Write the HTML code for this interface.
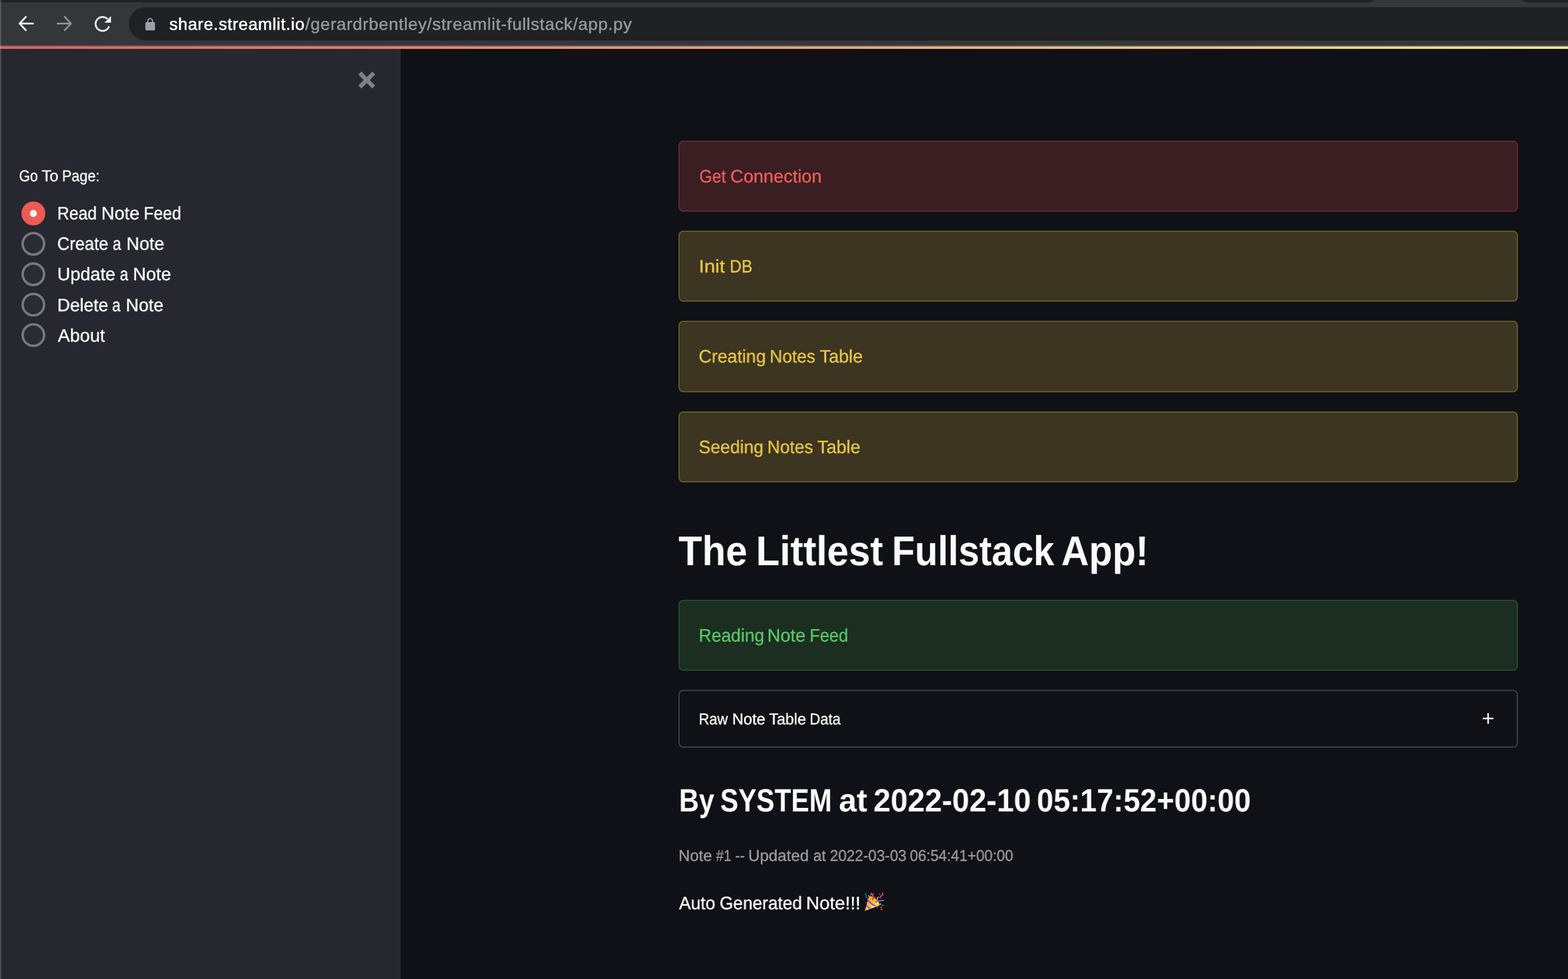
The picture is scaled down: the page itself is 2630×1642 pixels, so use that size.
<!DOCTYPE html>
<html lang="en">
<head>
<meta charset="utf-8">
<title>app · Streamlit</title>
<style>
*{box-sizing:border-box;margin:0;padding:0}
html,body{width:2630px;height:1642px;overflow:hidden;background:#0f1116}
body{position:relative;font-family:'Liberation Sans', sans-serif;-webkit-font-smoothing:antialiased}
.abs,.t,svg{position:absolute}
.t,.w{display:block;white-space:pre;line-height:1;transform-origin:0 0;font-style:normal;text-rendering:geometricPrecision;will-change:transform}
.w{position:absolute;top:0}
/* browser chrome */
#tabstrip{left:0;top:0;width:2630px;height:4px;background:#35363a}
#tabstrip i{position:absolute;top:0;height:4px;background:#202124}
#tabstrip i.l{left:0;width:2304px;border-bottom-right-radius:12px 4px}
#tabstrip i.r{left:2552px;width:78px;border-bottom-left-radius:12px 4px}
#toolbar{left:0;top:4px;width:2630px;height:72px;background:#35363a}
#tbline{left:0;top:76px;width:2630px;height:2px;background:#5d5f63}
#omni{left:216px;top:12px;width:2414px;height:56px;border-radius:28px 0 0 28px;background:#202124}
#url{letter-spacing:.7px}
#url .dom{color:#fff}
/* streamlit */
#deco{left:0;top:78px;width:2630px;height:4px;background:linear-gradient(90deg,#ee5c53,#fefc8e) 0 0/3012px 4px no-repeat}
#sidebar{left:0;top:82px;width:672px;height:1560px;background:#26272f}
#main{left:672px;top:82px;width:1958px;height:1560px;background:#0f1116}
#edge{left:0;top:0;width:2px;height:1642px;background:rgba(255,255,255,.18)}
.alert{left:1138px;width:1408px;height:119px;border:2px solid;border-radius:8px}
.err{background:#3a1e22;border-color:#622c2e}
.warn{background:#3c3521;border-color:#685a2c}
.ok{background:#1b2e21;border-color:#264c2a}
#exp{left:1138px;top:1157px;width:1408px;height:97px;border:2px solid #404145;border-radius:8px}
.radio{left:36px;width:40px;height:40px;border-radius:50%;border:4px solid #78787e;background:#2a2b35}
.radio.on{border:14px solid #ed5b52;background:#eff1f5}
#url{left:0;top:27px;font-size:28.0px;font-weight:400;color:#96979a;-webkit-text-stroke:0.55px}
#url .w0{left:284.39px;transform:scaleX(1.0074)}
#url .w1{left:511.77px;transform:scaleX(1.0277)}
#lbl{left:0;top:282px;font-size:26.4px;font-weight:400;color:#fafafa;-webkit-text-stroke:0.4px}
#lbl .w0{left:32.46px;transform:scaleX(0.8947)}
#lbl .w1{left:70.1px;transform:scaleX(1.0075)}
#lbl .w2{left:104.47px;transform:scaleX(0.9143)}
#r1{left:0;top:344px;font-size:30.3px;font-weight:400;color:#fafafa;-webkit-text-stroke:0.4px}
#r1 .w0{left:96.04px;transform:scaleX(0.9168)}
#r1 .w1{left:169.96px;transform:scaleX(0.995)}
#r1 .w2{left:240.55px;transform:scaleX(0.9108)}
#r2{left:0;top:395px;font-size:30.3px;font-weight:400;color:#fafafa;-webkit-text-stroke:0.4px}
#r2 .w0{left:96.32px;transform:scaleX(0.9435)}
#r2 .w1{left:188.89px;transform:scaleX(0.84)}
#r2 .w2{left:211.57px;transform:scaleX(0.9917)}
#r3{left:0;top:446px;font-size:30.3px;font-weight:400;color:#fafafa;-webkit-text-stroke:0.4px}
#r3 .w0{left:96.3px;transform:scaleX(0.9989)}
#r3 .w1{left:200.79px;transform:scaleX(0.84)}
#r3 .w2{left:223.16px;transform:scaleX(0.9983)}
#r4{left:0;top:498px;font-size:30.3px;font-weight:400;color:#fafafa;-webkit-text-stroke:0.4px}
#r4 .w0{left:96.0px;transform:scaleX(0.9769)}
#r4 .w1{left:187.99px;transform:scaleX(0.84)}
#r4 .w2{left:210.98px;transform:scaleX(0.9868)}
#r5{left:0;top:549px;font-size:30.3px;font-weight:400;color:#fafafa;-webkit-text-stroke:0.4px}
#r5 .w0{left:96.55px;transform:scaleX(0.9987)}
#a1{left:0;top:282px;font-size:30.3px;font-weight:400;color:#ee5f55;-webkit-text-stroke:0.4px}
#a1 .w0{left:1172.66px;transform:scaleX(0.9116)}
#a1 .w1{left:1225.05px;transform:scaleX(1.0003)}
#a2{left:0;top:433px;font-size:30.3px;font-weight:400;color:#e8c547;-webkit-text-stroke:0.4px}
#a2 .w0{left:1171.78px;transform:scaleX(1.0895)}
#a2 .w1{left:1223.78px;transform:scaleX(0.8987)}
#a3{left:0;top:584px;font-size:30.3px;font-weight:400;color:#e8c547;-webkit-text-stroke:0.4px}
#a3 .w0{left:1172.37px;transform:scaleX(0.983)}
#a3 .w1{left:1290.82px;transform:scaleX(0.9671)}
#a3 .w2{left:1374.9px;transform:scaleX(0.9979)}
#a4{left:0;top:736px;font-size:30.3px;font-weight:400;color:#e8c547;-webkit-text-stroke:0.4px}
#a4 .w0{left:1172.38px;transform:scaleX(0.9764)}
#a4 .w1{left:1286.71px;transform:scaleX(0.9711)}
#a4 .w2{left:1370.7px;transform:scaleX(0.9979)}
#h1{left:0;top:890px;font-size:69.9px;font-weight:700;color:#fafafa}
#h1 .w0{left:1138.4px;transform:scaleX(0.9281)}
#h1 .w1{left:1267.58px;transform:scaleX(0.9311)}
#h1 .w2{left:1496.24px;transform:scaleX(0.8992)}
#h1 .w3{left:1780.39px;transform:scaleX(0.9194)}
#a5{left:0;top:1052px;font-size:30.3px;font-weight:400;color:#5bc767;-webkit-text-stroke:0.4px}
#a5 .w0{left:1171.51px;transform:scaleX(0.9738)}
#a5 .w1{left:1286.64px;transform:scaleX(1.0033)}
#a5 .w2{left:1357.5px;transform:scaleX(0.9338)}
#exl{left:0;top:1193px;font-size:26.4px;font-weight:400;color:#fafafa;-webkit-text-stroke:0.4px}
#exl .w0{left:1171.85px;transform:scaleX(0.9235)}
#exl .w1{left:1227.51px;transform:scaleX(0.9934)}
#exl .w2{left:1289.81px;transform:scaleX(0.9814)}
#exl .w3{left:1358.43px;transform:scaleX(0.9333)}
#h2{left:0;top:1316px;font-size:54.2px;font-weight:700;color:#fafafa}
#h2 .w0{left:1138.72px;transform:scaleX(0.8504)}
#h2 .w1{left:1208.44px;transform:scaleX(0.84)}
#h2 .w2{left:1406.92px;transform:scaleX(0.987)}
#h2 .w3{left:1465.14px;transform:scaleX(0.9533)}
#h2 .w4{left:1738.71px;transform:scaleX(0.9275)}
#cap{left:0;top:1422px;font-size:26.4px;font-weight:400;color:#9a9b9e;-webkit-text-stroke:0.4px}
#cap .w0{left:1137.58px;transform:scaleX(1.0085)}
#cap .w1{left:1200.5px;transform:scaleX(0.8673)}
#cap .w2{left:1233.47px;transform:scaleX(0.927)}
#cap .w3{left:1255.42px;transform:scaleX(1.0187)}
#cap .w4{left:1363.54px;transform:scaleX(0.9619)}
#cap .w5{left:1391.55px;transform:scaleX(0.9511)}
#cap .w6{left:1526.0px;transform:scaleX(0.9419)}
#bod{left:0;top:1501px;font-size:30.3px;font-weight:400;color:#fafafa;-webkit-text-stroke:0.4px}
#bod .w0{left:1139.34px;transform:scaleX(0.974)}
#bod .w1{left:1207.19px;transform:scaleX(0.9661)}
#bod .w2{left:1352.29px;transform:scaleX(1.0249)}
</style>
</head>
<body>
<div class="abs" id="main"></div>
<div class="abs" id="sidebar"></div>
<div class="abs" id="deco"></div>
<header>
<div class="abs" id="toolbar"></div>
<div class="abs" id="tabstrip"><i class="l"></i><i class="r"></i></div>
<div class="abs" id="tbline"></div>
<div class="abs" id="omni"></div>
<svg id="nav" style="left:0;top:0" width="300" height="78" viewBox="0 0 300 78" fill="none">
<g stroke="#f1f2f3" stroke-width="3" stroke-linecap="round" stroke-linejoin="miter">
<path d="M55.4 39.5H34M43.4 28.3 32.9 39.5 43.4 50.7"/>
</g>
<g stroke="#8e8f92" stroke-width="3" stroke-linecap="round" stroke-linejoin="miter">
<path d="M96.5 39.5H118M108.5 28.3 119 39.5 108.5 50.7"/>
</g>
<path d="M183 44.3A11.7 11.7 0 1 1 180.3 31.8" stroke="#f1f2f3" stroke-width="3"/>
<path d="M186.1 27V38H175.2Z" fill="#f1f2f3"/>
<rect x="243.8" y="37" width="16.2" height="14" rx="2" fill="#9aa0a6"/>
<path d="M248 38V35.2a3.9 3.9 0 0 1 7.8 0V38" stroke="#9aa0a6" stroke-width="2"/>
</svg>
<div class="t" id="url"><span class="w w0 dom">share.streamlit.io</span><span class="w w1 pth">/gerardrbentley/streamlit-fullstack/app.py</span></div>
</header>
<aside>
<svg id="close" style="left:596px;top:114px" width="40" height="40" viewBox="596 114 40 40"><path fill="#7f8086" d="M601.05 125.03 606.2 119.87 615.24 129.33 624.26 120.13 629.42 125.03 620.4 134.32 629.17 143.52 624.26 148.5 615.24 139.22 606.2 148.5 601.05 143.52 610.08 134.32Z"/></svg>
<label class="t" id="lbl"><span class="w w0">Go</span> <span class="w w1">To</span> <span class="w w2">Page:</span></label>
<div role="radiogroup">
<div class="abs radio on" style="top:338px"></div><span class="t" id="r1"><span class="w w0">Read</span> <span class="w w1">Note</span> <span class="w w2">Feed</span></span>
<div class="abs radio" style="top:389px"></div><span class="t" id="r2"><span class="w w0">Create</span> <span class="w w1">a</span> <span class="w w2">Note</span></span>
<div class="abs radio" style="top:440px"></div><span class="t" id="r3"><span class="w w0">Update</span> <span class="w w1">a</span> <span class="w w2">Note</span></span>
<div class="abs radio" style="top:491px"></div><span class="t" id="r4"><span class="w w0">Delete</span> <span class="w w1">a</span> <span class="w w2">Note</span></span>
<div class="abs radio" style="top:542px"></div><span class="t" id="r5"><span class="w w0">About</span></span>
</div>
</aside>
<main>
<div class="abs alert err" style="top:236px"></div><p class="t" id="a1"><span class="w w0">Get</span> <span class="w w1">Connection</span></p>
<div class="abs alert warn" style="top:387px"></div><p class="t" id="a2"><span class="w w0">Init</span> <span class="w w1">DB</span></p>
<div class="abs alert warn" style="top:538px;height:120px"></div><p class="t" id="a3"><span class="w w0">Creating</span> <span class="w w1">Notes</span> <span class="w w2">Table</span></p>
<div class="abs alert warn" style="top:690px"></div><p class="t" id="a4"><span class="w w0">Seeding</span> <span class="w w1">Notes</span> <span class="w w2">Table</span></p>
<h1 class="t" id="h1"><span class="w w0">The</span> <span class="w w1">Littlest</span> <span class="w w2">Fullstack</span> <span class="w w3">App!</span></h1>
<div class="abs alert ok" style="top:1006px"></div><p class="t" id="a5"><span class="w w0">Reading</span> <span class="w w1">Note</span> <span class="w w2">Feed</span></p>
<div class="abs" id="exp"></div><span class="t" id="exl"><span class="w w0">Raw</span> <span class="w w1">Note</span> <span class="w w2">Table</span> <span class="w w3">Data</span></span>
<svg id="plus" style="left:2484px;top:1193px" width="24" height="24" viewBox="2484 1193 24 24"><path fill="#fafafa" d="M2494.7 1196h2.6v7.7h7.7v2.6h-7.7v7.7h-2.6v-7.7h-7.7v-2.6h7.7z"/></svg>
<h2 class="t" id="h2"><span class="w w0">By</span> <span class="w w1">SYSTEM</span> <span class="w w2">at</span> <span class="w w3">2022-02-10</span> <span class="w w4">05:17:52+00:00</span></h2>
<small class="t" id="cap"><span class="w w0">Note</span> <span class="w w1">#1</span> <span class="w w2">--</span> <span class="w w3">Updated</span> <span class="w w4">at</span> <span class="w w5">2022-03-03</span> <span class="w w6">06:54:41+00:00</span></small>
<p class="t" id="bod"><span class="w w0">Auto</span> <span class="w w1">Generated</span> <span class="w w2">Note!!!</span></p>
<svg id="emoji" role="img" aria-label="party popper" style="left:1449px;top:1496px" width="34" height="33" viewBox="0 0 34 33" fill="none">
<title>🎉</title>
<defs>
<linearGradient id="cone" x1="6" y1="12" x2="20" y2="28" gradientUnits="userSpaceOnUse"><stop offset="0" stop-color="#eda21a"/><stop offset=".45" stop-color="#f6c522"/><stop offset=".8" stop-color="#ffe94a"/><stop offset="1" stop-color="#f0a818"/></linearGradient>
<linearGradient id="band" x1="4" y1="12" x2="22" y2="27" gradientUnits="userSpaceOnUse"><stop offset="0" stop-color="#8f45e4"/><stop offset=".7" stop-color="#a04df0"/><stop offset="1" stop-color="#efaaf8"/></linearGradient>
<clipPath id="cc"><path d="M1.4 32 8.3 7.8Q9 5.9 11.6 7 21.5 11.5 26.4 20Q27.4 22.3 25 23.2Z"/></clipPath>
</defs>
<path d="M1.4 32 8.3 7.8Q9 5.9 11.6 7 21.5 11.5 26.4 20Q27.4 22.3 25 23.2Z" fill="url(#cone)"/>
<g clip-path="url(#cc)" stroke="url(#band)" stroke-width="2.6">
<path d="M5.5 12.6Q12 21 23.5 25.6"/><path d="M2.5 20.4Q7 26.6 15 29.8"/><path d="M0 27.6Q2.6 31 7 33"/>
</g>
<path d="M11.4 7.2Q19.5 10 24.4 16.6 26.8 20 25.4 22" stroke="#f19a12" stroke-width="1.6" opacity=".55"/>
<path d="M3.6 1.9 1.6 3.8 4.9 6 2.7 8.5 6.5 10.4 5.5 13.2" stroke="#2d5fd2" stroke-width="1.3" stroke-linejoin="round" stroke-linecap="round"/>
<path d="M15.1 13.2V7.6Q15 4 12.3 2" stroke="#f0405f" stroke-width="2" stroke-linecap="round"/>
<path d="M23 12.6Q21.6 8.6 24 8.5 26 8.7 27.4 9.8 29 7.9 27.8 6.5 30.4 6.9 31.8 5.3 32.5 3.6 31.2 2.4" stroke="#e8395c" stroke-width="1.7" stroke-linecap="round" stroke-linejoin="round"/>
<path d="M22.9 12.2V9.6M31.5 2.9 31.1 2.5" stroke="#f9a5bb" stroke-width="1.5" stroke-linecap="round"/>
<path d="M19.5 16.9Q24.6 14.2 33 14.2" stroke="#4a8af4" stroke-width="2.1" stroke-linecap="round"/>
<path d="M6.7 5.2 9 6.4 7.2 7.5Z" fill="#ffe53a"/>
<circle cx="11.5" cy="4.6" r="1" fill="#f58ab0"/><circle cx="16.4" cy="3.6" r="1" fill="#3d8df0"/><circle cx="18.3" cy="8.4" r="1" fill="#3d8df0"/>
<circle cx="26.2" cy="3.4" r="1" fill="#e8497a"/><circle cx="3.5" cy="17.8" r="1" fill="#e8395c"/><circle cx="28.2" cy="20.4" r="1.1" fill="#ffe53a"/>
<circle cx="31.7" cy="22.4" r="1" fill="#f5a030"/><circle cx="29" cy="25.6" r="1.1" fill="#f59a18"/><circle cx="22.9" cy="25.7" r="1" fill="#2f6fe0"/><circle cx="29.8" cy="29.2" r="1.1" fill="#f890c0"/>
</svg>
</main>
<div class="abs" id="edge"></div>
</body>
</html>
